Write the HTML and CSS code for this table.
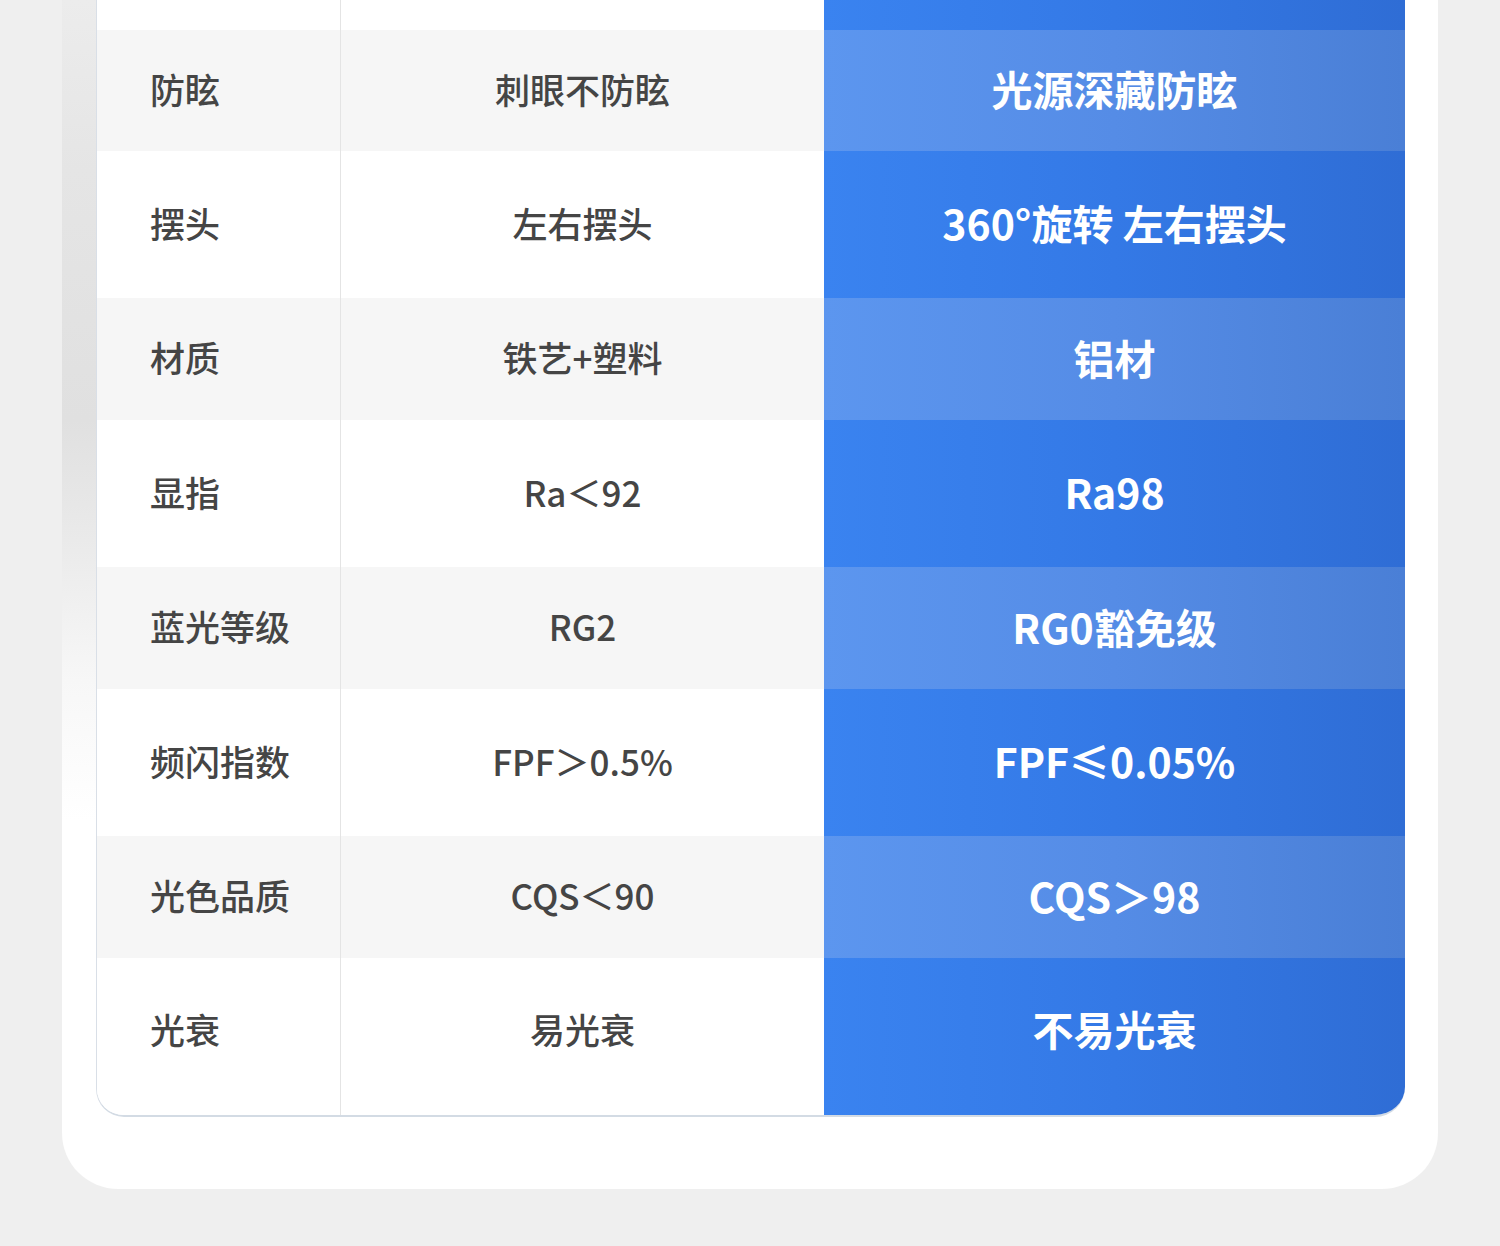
FILE: index.html
```html
<!DOCTYPE html>
<html lang="zh-CN">
<head>
<meta charset="utf-8">
<title>参数对比</title>
<link rel="stylesheet" href="styles.css">
</head>
<body>
<div class="page">
  <div class="card">
    <div class="table">
      <div class="row white top">
        <div class="cell label"></div>
        <div class="cell mid"></div>
        <div class="cell blue"></div>
      </div>
      <div class="row gray short first">
        <div class="cell label">防眩</div>
        <div class="cell mid">刺眼不防眩</div>
        <div class="cell blue">光源深藏防眩</div>
      </div>
      <div class="row white tall">
        <div class="cell label">摆头</div>
        <div class="cell mid">左右摆头</div>
        <div class="cell blue">360°旋转 左右摆头</div>
      </div>
      <div class="row gray short">
        <div class="cell label">材质</div>
        <div class="cell mid">铁艺+塑料</div>
        <div class="cell blue">铝材</div>
      </div>
      <div class="row white tall">
        <div class="cell label">显指</div>
        <div class="cell mid">Ra＜92</div>
        <div class="cell blue">Ra98</div>
      </div>
      <div class="row gray short">
        <div class="cell label">蓝光等级</div>
        <div class="cell mid">RG2</div>
        <div class="cell blue">RG0豁免级</div>
      </div>
      <div class="row white tall">
        <div class="cell label">频闪指数</div>
        <div class="cell mid">FPF＞0.5%</div>
        <div class="cell blue">FPF≤0.05%</div>
      </div>
      <div class="row gray short">
        <div class="cell label">光色品质</div>
        <div class="cell mid">CQS＜90</div>
        <div class="cell blue">CQS＞98</div>
      </div>
      <div class="row white last">
        <div class="cell label">光衰</div>
        <div class="cell mid">易光衰</div>
        <div class="cell blue">不易光衰</div>
      </div>
    </div>
  </div>
</div>
</body>
</html>
```

FILE: styles.css
```css
html, body {
  margin: 0;
  padding: 0;
  background: #efefef;
}

.page {
  width: 1500px;
  height: 1246px;
  overflow: hidden;
  font-family: "Noto Sans CJK SC", "Noto Sans", sans-serif;
}

.card {
  margin-left: 62px;
  width: 1376px;
  box-sizing: border-box;
  padding: 0 33px 72px 34px;
  background-color: #ffffff;
  background-image: linear-gradient(to bottom, #ececec 0, #e5e5e5 170px, #e0e0e0 420px, #eaeaea 540px, #f7f7f7 680px, #ffffff 820px);
  background-size: 34px 100%;
  background-repeat: no-repeat;
  border-radius: 0 0 56px 56px;
}

.table {
  width: 1309px;
  box-sizing: border-box;
  border-left: 1px solid #d9dfe7;
  border-bottom: 2px solid #d3dbe4;
  border-radius: 0 0 30px 28px;
  overflow: hidden;
  background: #ffffff;
}

.row {
  display: grid;
  grid-template-columns: 243px 484px 581px;
}

.row.top { height: 30px; }
.row.short { height: 122px; }
.row.short.first { height: 121px; }
.row.tall { height: 147px; }
.row.last { height: 157px; }

.cell {
  display: flex;
  align-items: center;
  box-sizing: border-box;
  padding-bottom: 5px;
  font-size: 35px;
  color: #454545;
  font-weight: 500;
}

.row.last .cell {
  padding-bottom: 17px;
}

.label {
  padding-left: 53px;
}

.mid {
  justify-content: center;
  border-left: 1px solid #e4e4e4;
}

.blue {
  justify-content: center;
  color: #ffffff;
  font-size: 41px;
  font-weight: 700;
}

.row.gray .label,
.row.gray .mid {
  background: #f6f6f6;
}

.row.white .label,
.row.white .mid {
  background: #ffffff;
}

.row.white .blue {
  background: linear-gradient(to right, #3a83f0 0%, #3479e6 50%, #2f6dd5 100%);
}

.row.gray .blue {
  background: linear-gradient(to right, #5c96ef 0%, #558ce6 50%, #4a7fd6 100%);
}
```
